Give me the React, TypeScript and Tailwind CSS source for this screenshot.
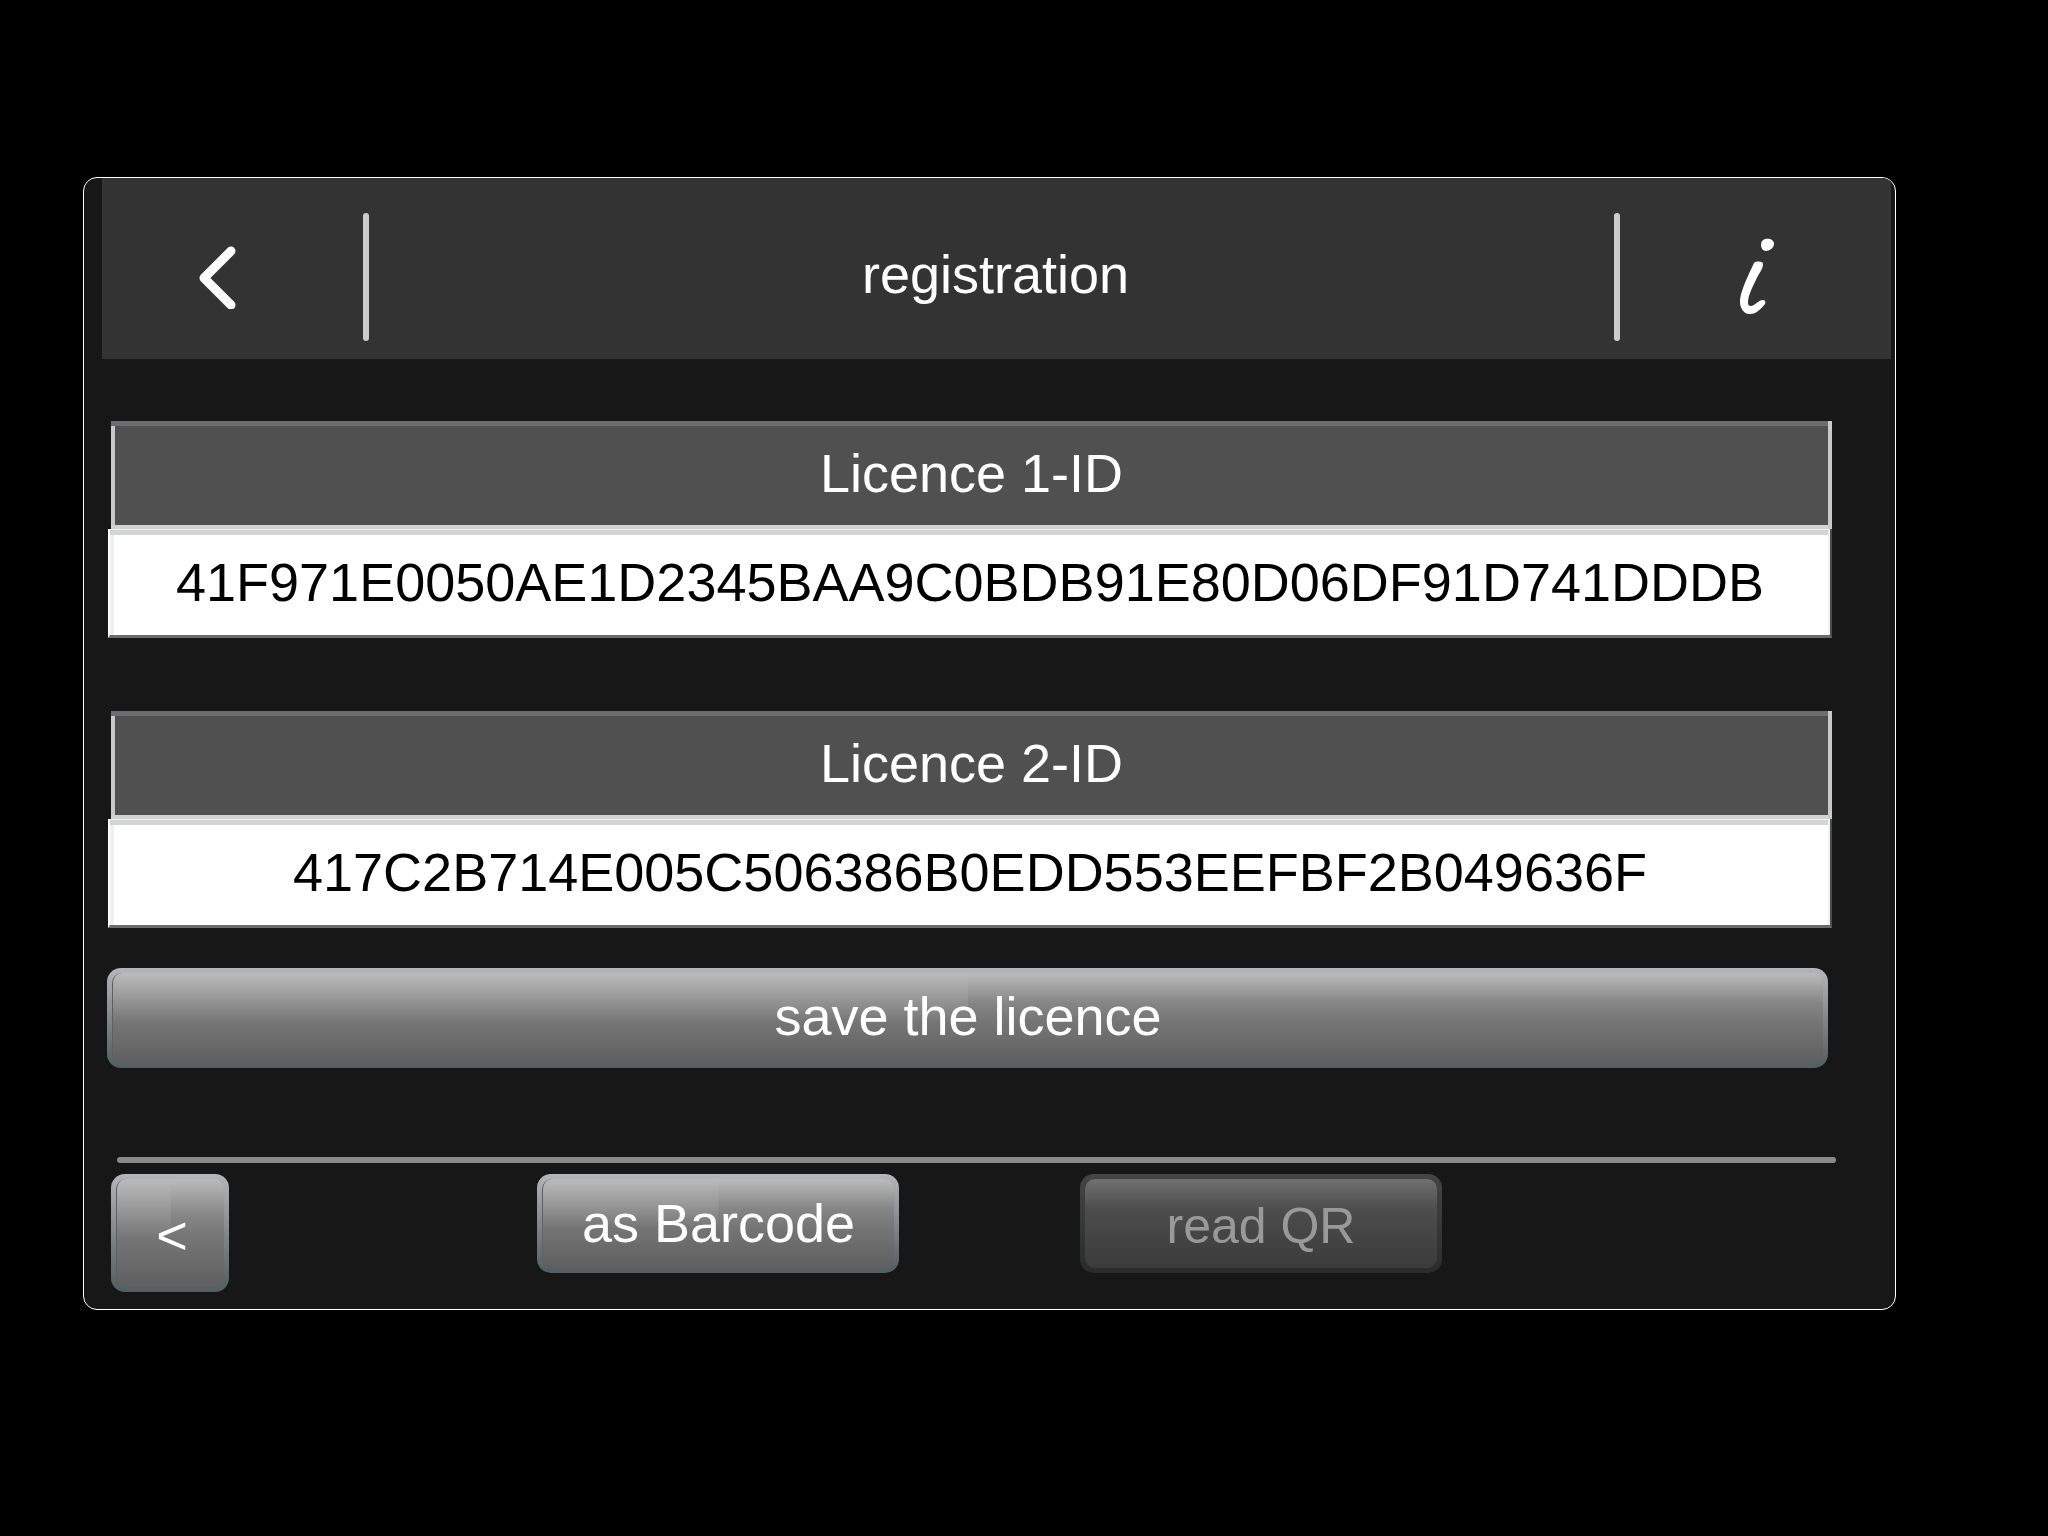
import type { ReactNode } from "react";
import clsx from "clsx";

function Divider() {
  return <div className="h-32 w-[6px] shrink-0 rounded-full bg-[#cccccc]" />;
}

function LicenceField({ id, label, value }: { id: string; label: string; value: string }) {
  return (
    <div className="flex flex-col">
      <label
        htmlFor={id}
        className="ml-[3px] flex h-[108px] items-center justify-center bg-[#505050] pb-1 text-[54px] leading-[60px] text-white shadow-[inset_-4px_0_#c8c9cb,inset_0_-4px_#d2d4d3,inset_0_5px_#6c6d6e,inset_4px_0_#c8c9cb]"
      >
        {label}
      </label>
      <div className="border-r-2 border-b-[3px] border-l-2 border-r-[#4b4d4c] border-b-[#6a6b6b] border-l-white">
        <input
          id={id}
          readOnly
          value={value}
          className="block h-[106px] w-full bg-white pb-px text-center text-[54px] text-black shadow-[inset_-2px_0_#eff1f0,inset_0_1px_#eceeed,inset_0_6px_#d3d5d4,inset_4px_0_#eff1f0] outline-none"
        />
      </div>
    </div>
  );
}

type GlossButtonProps = {
  className?: string;
  labelClassName?: string;
  disabled?: boolean;
  children: ReactNode;
};

function GlossButton({ className, labelClassName = "pb-[2px]", disabled, children }: GlossButtonProps) {
  return (
    <button
      type="button"
      disabled={disabled}
      className={clsx(
        "flex shrink-0 rounded-[14px] p-[5px]",
        disabled
          ? "bg-linear-to-b from-[#454545] to-[#292b2d] text-[50px] text-[#999999]"
          : "bg-linear-to-b from-[#b3b7ba] to-[#535c5f] text-[54px] text-white",
        className
      )}
    >
      <span
        className={clsx(
          "flex flex-1 items-center justify-center self-stretch rounded-[10px] leading-[60px]",
          disabled
            ? "bg-[linear-gradient(#707070,#4c4c4c_35%,#3b3b3b)]"
            : "border-l border-l-[#5c6062] bg-[linear-gradient(#bbbbbb,#9c9c9c_25%,#757575_55%,#5f5f5f),linear-gradient(#bbbbbb,#868686_33%,#757575_55%,#5f5f5f)] bg-[length:50%_100%,100%_100%] bg-no-repeat",
          labelClassName
        )}
      >
        {children}
      </span>
    </button>
  );
}

export default function App() {
  return (
    <div className="min-h-screen bg-black pt-[177px] pr-[152px] pb-[226px] pl-[83px] font-['Liberation_Sans',Arial,sans-serif]">
      <main className="overflow-hidden rounded-[14px] border border-white bg-[#171717] pb-[17px]">
        <header className="mr-[4px] ml-[18px] flex h-[181px] items-center bg-[#333333] pt-4">
          <button type="button" aria-label="Back" className="flex w-[261px] shrink-0 items-center pl-[96px]">
            <svg
              viewBox="0 0 40 64"
              className="h-16 w-10"
              fill="none"
              stroke="white"
              strokeWidth="9"
              strokeLinecap="round"
              strokeLinejoin="round"
            >
              <path d="M33 6 L6 33 L33 60" />
            </svg>
          </button>
          <Divider />
          <h1 className="flex-1 pb-[6px] pl-2 text-center text-[54px] leading-[60px] text-white">registration</h1>
          <Divider />
          <button type="button" aria-label="Info" className="flex w-[271px] shrink-0 items-center pl-[119px]">
            <svg viewBox="0 0 36 80" className="h-20 w-9" fill="white">
              <path d="M26 2 C31 1 35 3 35 7 C35 11 30 14 27 14 C24 14 22 11 22 8 C22 5 23 3 26 2 Z" />
              <path d="M15 26 C17 24 24 24 24 27 C24 33 19 37 16 45 C13 51 9 59 9 66 C9 68 10 69 12 69 C16 69 19 63 24 63 C26 63 27 65 26 67 C22 72 16 78 10 77 C5 77 1 71 1 65 C1 54 11 35 15 26 Z" />
            </svg>
          </button>
        </header>

        <div className="mt-[62px] mr-[63px] ml-[24px] flex flex-col gap-[73px]">
          <LicenceField id="licence-1" label="Licence 1-ID" value="41F971E0050AE1D2345BAA9C0BDB91E80D06DF91D741DDDB" />
          <LicenceField id="licence-2" label="Licence 2-ID" value="417C2B714E005C506386B0EDD553EEFBF2B049636F" />
        </div>

        <div className="mt-[40px] mr-[67px] ml-[23px] flex">
          <GlossButton className="h-[100px] flex-1" labelClassName="pb-1">
            save the licence
          </GlossButton>
        </div>

        <div className="mt-[89px] mr-[59px] ml-[33px] h-[6px] rounded-full bg-[#8a8a8a]" />

        <footer className="mt-[11px] ml-[27px] flex items-start">
          <GlossButton className="h-[118px] w-[118px]" labelClassName="pt-1 pl-[3px]">
            &lt;
          </GlossButton>
          <GlossButton className="ml-[308px] h-[99px] w-[362px]">as Barcode</GlossButton>
          <GlossButton className="ml-[181px] h-[99px] w-[362px]" labelClassName="pt-1" disabled>
            read QR
          </GlossButton>
        </footer>
      </main>
    </div>
  );
}
